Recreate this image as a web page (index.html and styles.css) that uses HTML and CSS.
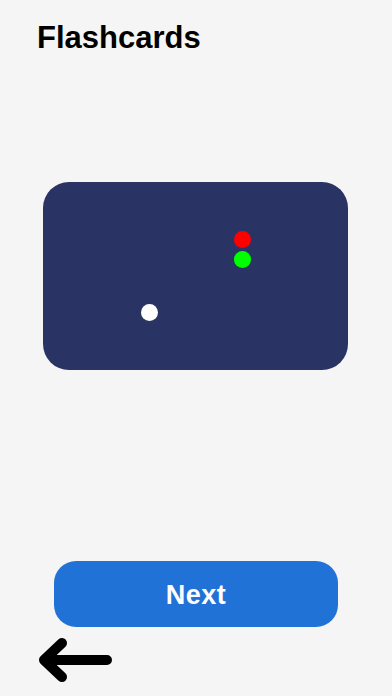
FILE: index.html
```html
<!DOCTYPE html>
<html>
<head>
<meta charset="utf-8">
<link rel="stylesheet" href="styles.css">
</head>
<body>
<div class="app">
  <h1 class="title">Flashcards</h1>
  <div class="card">
    <span class="dot dot-red"></span>
    <span class="dot dot-green"></span>
    <span class="dot dot-white"></span>
  </div>
  <button class="next">Next</button>
  <div class="back">
    <svg width="84" height="52" viewBox="0 0 84 52">
      <path d="M73 26H10M28 9L10 26L28 43" fill="none" stroke="#000" stroke-width="10" stroke-linecap="round" stroke-linejoin="round"/>
    </svg>
  </div>
</div>
</body>
</html>
```
FILE: styles.css
```css
html, body {
  margin: 0;
  padding: 0;
  background: #f5f5f5;
}
.app {
  width: 392px;
  height: 696px;
  display: flex;
  flex-direction: column;
  font-family: "Liberation Sans", Arial, sans-serif;
  overflow: hidden;
}
.title {
  margin: 0;
  padding: 20px 0 0 37px;
  font-size: 31px;
  line-height: 36px;
  font-weight: 700;
  color: #000;
}
.card {
  position: relative;
  margin: 126px 0 0 43px;
  width: 305px;
  height: 188px;
  background: #2a3464;
  border-radius: 26px;
}
.dot {
  position: absolute;
  width: 17px;
  height: 17px;
  border-radius: 50%;
}
.dot-red {
  background: #ff0000;
  left: 191px;
  top: 49px;
}
.dot-green {
  background: #00ff00;
  left: 191px;
  top: 69px;
}
.dot-white {
  background: #ffffff;
  left: 98px;
  top: 122px;
}
.next {
  margin: 191px 0 0 54px;
  width: 284px;
  height: 66px;
  border: none;
  border-radius: 22px;
  background: #2172d6;
  color: #fff;
  font-family: "Liberation Sans", Arial, sans-serif;
  font-size: 27px;
  letter-spacing: 0.5px;
  font-weight: 700;
  padding: 2px 0 0 0;
}
.back {
  margin: 7px 0 0 34px;
  width: 84px;
  height: 52px;
}
.back svg {
  display: block;
}
```
